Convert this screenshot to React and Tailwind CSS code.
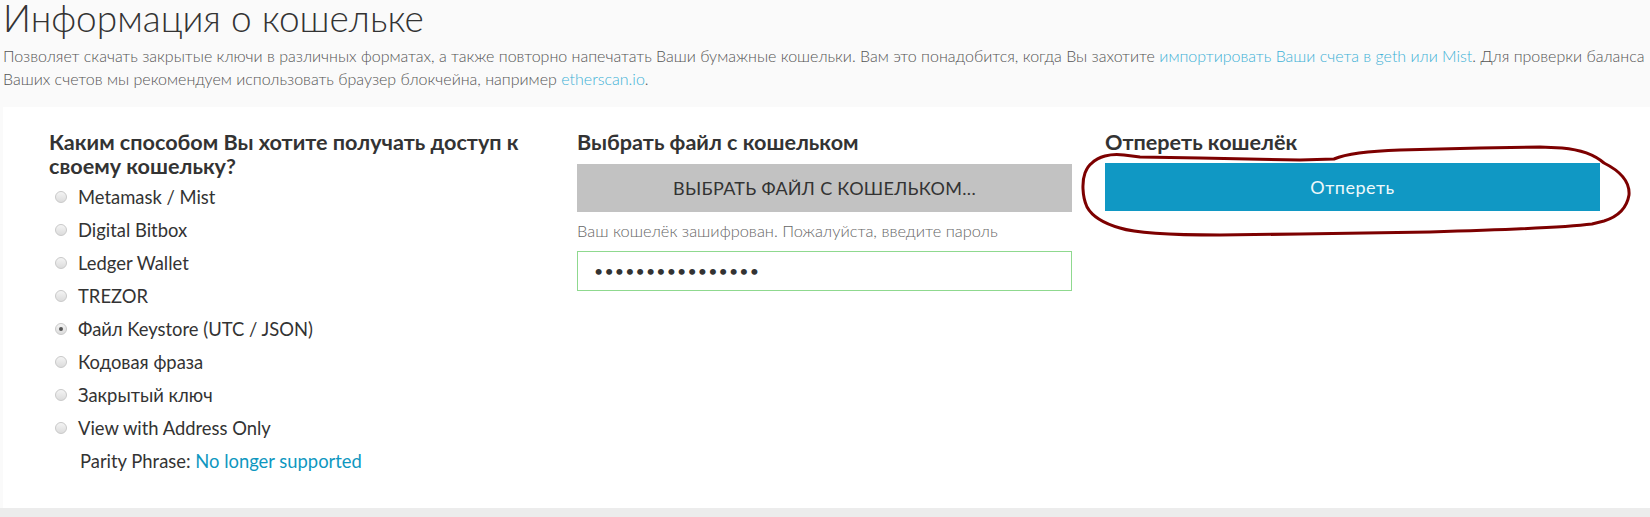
import React from 'react'

const methods = [
  { label: 'Metamask / Mist' },
  { label: 'Digital Bitbox' },
  { label: 'Ledger Wallet' },
  { label: 'TREZOR' },
  { label: 'Файл Keystore (UTC / JSON)', checked: true },
  { label: 'Кодовая фраза' },
  { label: 'Закрытый ключ' },
  { label: 'View with Address Only' },
]

function Radio({ checked }) {
  return (
    <span className="flex h-[12px] w-[12px] items-center justify-center rounded-full border border-[#c9c9c9] bg-gradient-to-b from-[#f4f4f4] to-[#dcdcdc]">
      {checked && <span className="h-[4px] w-[4px] rounded-full bg-[#555]" />}
    </span>
  )
}

// hand-drawn red outline around the unlock button
function Scribble() {
  return (
    <svg className="pointer-events-none absolute left-0 top-0" width="1650" height="517" viewBox="0 0 1650 517">
      <path
        d="M1092 163 C1098 157 1110 153 1124 155 L1140 157 L1200 158 L1300 160 L1334 159 C1348 153 1370 151 1400 150 L1480 148 L1540 147 L1562 148 C1585 150 1596 156 1604 163 C1620 171 1630 182 1629 195 C1627 207 1620 216 1604 221 L1592 224 C1560 228 1500 230 1430 232 L1300 234 L1220 235 C1170 235 1135 233 1120 228 C1102 223 1092 216 1087 207 C1082 196 1082 181 1085 173 C1087 168 1089 165 1092 163 Z"
        fill="none"
        stroke="#7d0000"
        strokeWidth="3"
        strokeLinejoin="round"
      />
    </svg>
  )
}

export default function App() {
  return (
    <div className="relative h-[517px] w-[1650px] overflow-hidden bg-[#fafafa] font-['Lato','Noto_Sans',sans-serif] text-[#333]">
      <div className="pl-[3px]">
        <h1 className="text-[37px] font-light leading-[36px] text-[#333]">Информация о кошельке</h1>
        <p className="mt-[8px] text-[16px] font-light leading-[23px] text-[#555]">
          Позволяет скачать закрытые ключи в различных форматах, а также повторно напечатать Ваши бумажные кошельки. Вам это понадобится, когда Вы захотите{' '}
          <a className="text-[#3eb1d6]">импортировать Ваши счета в geth или Mist</a>. Для проверки баланса Ваших счетов мы рекомендуем использовать браузер блокчейна, например{' '}
          <a className="text-[#3eb1d6]">etherscan.io</a>.
        </p>
      </div>

      <div className="ml-[3px] mt-[17px] h-[401px] bg-white">
        <div className="grid grid-cols-[495px_495px_495px] gap-x-[33px] pl-[46px] pt-[23px]">
          <div>
            <h4 className="text-[21.6px] font-bold leading-[24px] text-[#333]">
              Каким способом Вы хотите получать доступ к своему кошельку?
            </h4>
            <div className="mt-[2px]">
              {methods.map((m) => (
                <label key={m.label} className="flex h-[33px] items-center">
                  <span className="ml-[6px] mr-[11px]">
                    <Radio checked={m.checked} />
                  </span>
                  <span className="text-[18.4px] leading-[24px]">{m.label}</span>
                </label>
              ))}
              <div className="flex h-[33px] items-center pl-[31px] text-[18.4px] leading-[24px]">
                Parity Phrase:&nbsp;<a className="text-[#0e97c0]">No longer supported</a>
              </div>
            </div>
          </div>

          <div>
            <h4 className="text-[21.6px] font-bold leading-[24px] text-[#333]">Выбрать файл с кошельком</h4>
            <button className="mt-[10px] flex h-[48px] w-full items-center justify-center bg-[#c2c2c2] text-[18px] tracking-[0.3px] text-[#333]">
              ВЫБРАТЬ ФАЙЛ С КОШЕЛЬКОМ...
            </button>
            <p className="mt-[9px] text-[16.4px] font-light leading-[20px] text-[#666]">
              Ваш кошелёк зашифрован. Пожалуйста, введите пароль
            </p>
            <div className="mt-[10px] flex h-[40px] w-full items-center border border-[#8fd98f] bg-white pl-[16px] text-[16px] tracking-[1.1px] text-[#333]">
              ••••••••••••••••
            </div>
          </div>

          <div>
            <h4 className="text-[21.6px] font-bold leading-[24px] text-[#333]">Отпереть кошелёк</h4>
            <button className="mt-[9px] flex h-[48px] w-full items-center justify-center bg-[#1098c4] text-[18px] tracking-[0.5px] text-[#eef8fb]">
              Отпереть
            </button>
          </div>
        </div>
      </div>
      <div className="h-[9px] bg-[#ececec]" />

      <Scribble />
    </div>
  )
}
